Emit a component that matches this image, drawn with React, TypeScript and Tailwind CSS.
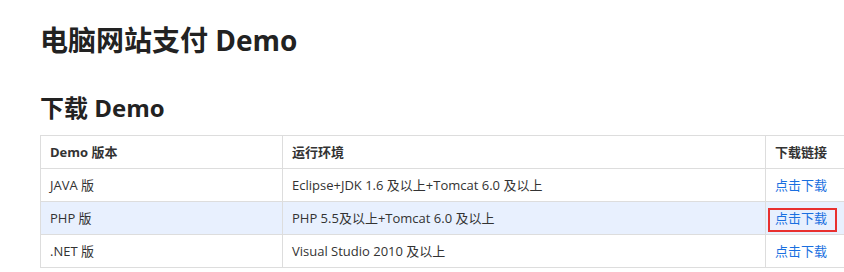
const rows = [
  { name: 'JAVA 版', env: 'Eclipse+JDK 1.6 及以上+Tomcat 6.0 及以上' },
  { name: 'PHP 版', env: 'PHP 5.5及以上+Tomcat 6.0 及以上', active: true },
  { name: '.NET 版', env: 'Visual Studio 2010 及以上' },
];

export default function App() {
  return (
    <main
      className="w-[844px] h-[272px] overflow-hidden bg-white text-[#333] pl-10 pt-[22px]"
      style={{ fontFamily: '"Open Sans", "Noto Sans CJK SC", sans-serif' }}
    >
      <h1 className="text-[28px] leading-9 font-bold text-[#222] whitespace-nowrap">电脑网站支付 Demo</h1>

      <h2 className="mt-[34px] text-[24px] leading-8 font-bold text-[#222] whitespace-nowrap">下载 Demo</h2>

      <table className="mt-[11px] w-[816px] border-collapse text-[13px] leading-5">
        <thead>
          <tr>
            <th className="w-[242px] border border-[#ddd] px-[9px] py-1.5 text-left font-bold">Demo 版本</th>
            <th className="w-[483px] border border-[#ddd] px-[9px] py-1.5 text-left font-bold">运行环境</th>
            <th className="border border-[#ddd] px-[9px] py-1.5 text-left font-bold whitespace-nowrap">下载链接</th>
          </tr>
        </thead>
        <tbody>
          {rows.map((row) => (
            <tr key={row.name} className={row.active ? 'bg-[#e8f0fe]' : ''}>
              <td className="border border-[#ddd] px-[9px] py-1.5">{row.name}</td>
              <td className="border border-[#ddd] px-[9px] py-1.5 whitespace-nowrap">{row.env}</td>
              <td className="relative border border-[#ddd] px-[9px] py-1.5 whitespace-nowrap">
                <a href="#" className="text-[#1a6fe0]">点击下载</a>
                {row.active && (
                  <span className="absolute left-[2px] top-[6px] w-[69px] h-[24px] border-2 border-[#e8302f]" />
                )}
              </td>
            </tr>
          ))}
        </tbody>
      </table>
    </main>
  );
}
